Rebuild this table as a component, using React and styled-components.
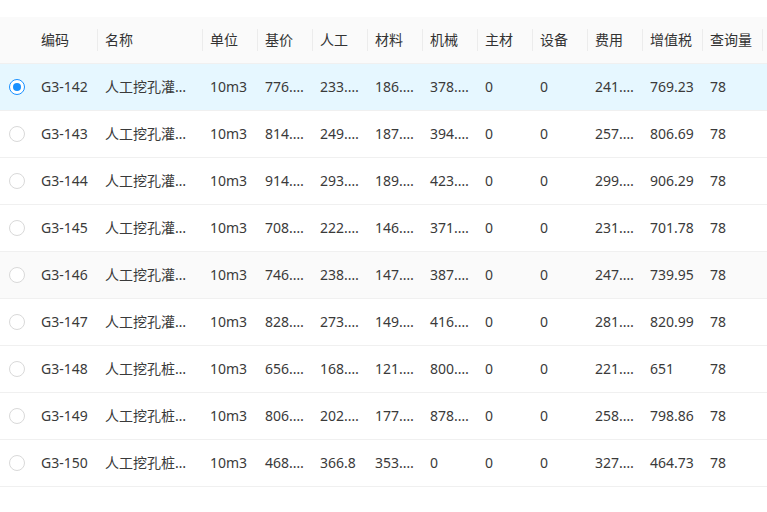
import React from "react";
import styled, { createGlobalStyle } from "styled-components";

const GlobalStyle = createGlobalStyle`
  html, body {
    margin: 0;
    padding: 0;
    background: #fff;
  }
  body {
    font-family: "Noto Sans", "Noto Sans CJK SC", sans-serif;
    font-size: 14px;
    color: #3a3a3a;
  }
`;

//Column setup
const columns = [
  { key: "code", title: "编码", width: 64 },
  { key: "name", title: "名称", width: 105 },
  { key: "unit", title: "单位", width: 55 },
  { key: "base", title: "基价", width: 55 },
  { key: "labor", title: "人工", width: 55 },
  { key: "material", title: "材料", width: 55 },
  { key: "machine", title: "机械", width: 55 },
  { key: "mainMaterial", title: "主材", width: 55 },
  { key: "equipment", title: "设备", width: 55 },
  { key: "fee", title: "费用", width: 55 },
  { key: "tax", title: "增值税", width: 60 },
  { key: "queries", title: "查询量", width: 60 },
  { key: "extra", title: "", width: 60 },
];

const rows = [
  { code: "G3-142", name: "人工挖孔灌注桩桩芯混凝土", base: "776.45", labor: "233.21", material: "186.52", machine: "378.12", fee: "241.36", tax: "769.23" },
  { code: "G3-143", name: "人工挖孔灌注桩护壁混凝土", base: "814.73", labor: "249.64", material: "187.35", machine: "394.58", fee: "257.19", tax: "806.69" },
  { code: "G3-144", name: "人工挖孔灌注桩砖护壁", base: "914.86", labor: "293.17", material: "189.42", machine: "423.65", fee: "299.54", tax: "906.29" },
  { code: "G3-145", name: "人工挖孔灌注桩扩大头", base: "708.34", labor: "222.85", material: "146.27", machine: "371.46", fee: "231.08", tax: "701.78" },
  { code: "G3-146", name: "人工挖孔灌注桩入岩增加", base: "746.92", labor: "238.47", material: "147.63", machine: "387.21", fee: "247.85", tax: "739.95" },
  { code: "G3-147", name: "人工挖孔灌注桩钢筋笼", base: "828.57", labor: "273.39", material: "149.18", machine: "416.74", fee: "281.62", tax: "820.99" },
  { code: "G3-148", name: "人工挖孔桩桩挖土方", base: "656.41", labor: "168.93", material: "121.56", machine: "800.37", fee: "221.74", tax: "651" },
  { code: "G3-149", name: "人工挖孔桩桩挖淤泥", base: "806.12", labor: "202.48", material: "177.29", machine: "878.63", fee: "258.41", tax: "798.86" },
  { code: "G3-150", name: "人工挖孔桩桩挖岩石", base: "468.25", labor: "366.8", material: "353.74", machine: "0", fee: "327.16", tax: "464.73" },
].map((row) => ({
  ...row,
  unit: "10m3",
  mainMaterial: "0",
  equipment: "0",
  queries: "78",
  extra: "",
}));

const SELECTED = "G3-142";
const HOVERED = "G3-146";

const Radio = ({ checked }) => (
  <RadioOuter checked={checked}>{checked && <RadioDot />}</RadioOuter>
);

const App = () => {
  return (
    <>
      <GlobalStyle />
      <Page>
        <TableWrap>
          <Table>
            <colgroup>
              <Col width={33} />
              {columns.map((col) => (
                <Col key={col.key} width={col.width} />
              ))}
            </colgroup>
            <thead>
              <tr>
                <HeadCell first />
                {columns.map((col) => (
                  <HeadCell key={col.key} first={col.key === "code"}>
                    {col.title}
                  </HeadCell>
                ))}
              </tr>
            </thead>
            <tbody>
              {rows.map((row) => (
                <Row
                  key={row.code}
                  selected={row.code === SELECTED}
                  hovered={row.code === HOVERED}
                >
                  <SelectCell>
                    <Radio checked={row.code === SELECTED} />
                  </SelectCell>
                  {columns.map((col) => (
                    <Cell key={col.key}>{row[col.key]}</Cell>
                  ))}
                </Row>
              ))}
            </tbody>
          </Table>
        </TableWrap>
      </Page>
    </>
  );
};

const Page = styled.div`
  padding-top: 17px;
  width: 767px;
  overflow: hidden;
`;

const TableWrap = styled.div`
  width: 767px;
  overflow: hidden;
`;

const Table = styled.table`
  table-layout: fixed;
  border-collapse: separate;
  border-spacing: 0;
  width: 822px;
`;

const Col = styled.col`
  width: ${(props) => props.width}px;
`;

const HeadCell = styled.th`
  position: relative;
  height: 47px;
  box-sizing: border-box;
  padding: 0 8px;
  background: #fafafa;
  border-bottom: 1px solid #f0f0f0;
  font-weight: 400;
  text-align: left;
  line-height: 22px;
  color: #333;
  white-space: nowrap;
  overflow: hidden;

  &::before {
    content: "";
    display: ${(props) => (props.first ? "none" : "block")};
    position: absolute;
    left: 0;
    top: 50%;
    width: 1px;
    height: 22px;
    transform: translateY(-50%);
    background: #ececec;
  }
`;

const Row = styled.tr`
  background: ${(props) =>
    props.selected ? "#e6f7ff" : props.hovered ? "#fafafa" : "#fff"};
`;

const Cell = styled.td`
  height: 47px;
  box-sizing: border-box;
  padding: 0 8px;
  border-bottom: 1px solid #f0f0f0;
  line-height: 22px;
  white-space: nowrap;
  overflow: hidden;
  text-overflow: ellipsis;
  color: #3a3a3a;
`;

const SelectCell = styled(Cell)`
  padding: 0 0 0 9px;
  text-overflow: clip;
`;

const RadioOuter = styled.span`
  display: flex;
  align-items: center;
  justify-content: center;
  width: 16px;
  height: 16px;
  box-sizing: border-box;
  border-radius: 50%;
  border: 1px solid ${(props) => (props.checked ? "#1890ff" : "#d9d9d9")};
  background: #fff;
`;

const RadioDot = styled.span`
  width: 8px;
  height: 8px;
  border-radius: 50%;
  background: #1890ff;
`;

export default App;
